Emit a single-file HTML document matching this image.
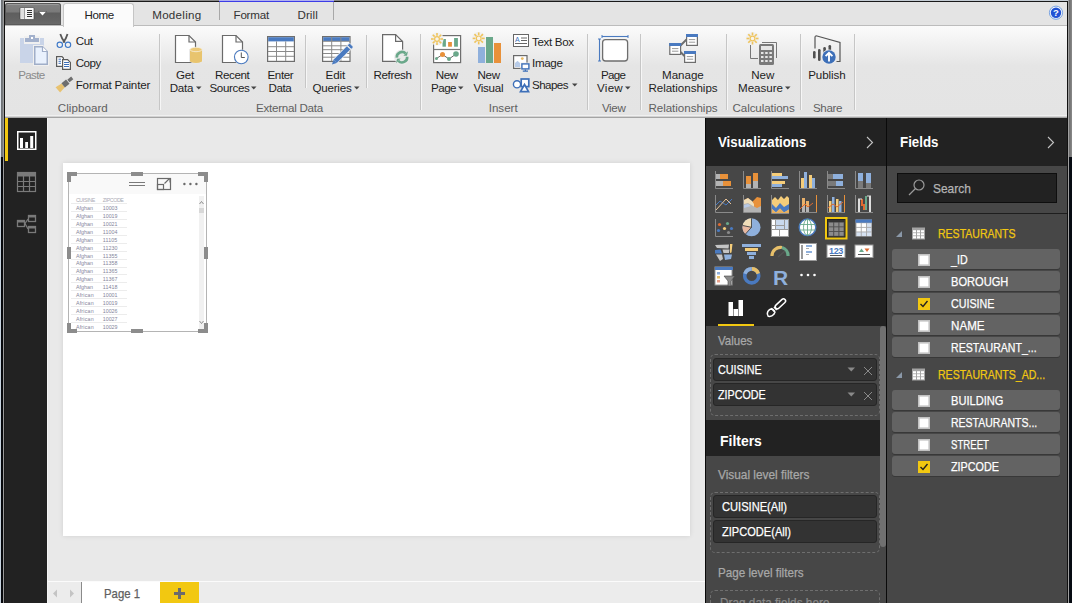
<!DOCTYPE html>
<html><head><meta charset="utf-8">
<style>
html,body{margin:0;padding:0;width:1072px;height:603px;overflow:hidden;background:#e9e9e9}
body{position:relative;font-family:"Liberation Sans",sans-serif}
.r{position:absolute;display:block}
.t{position:absolute;white-space:nowrap;line-height:1;font-family:"Liberation Sans",sans-serif}
</style></head><body>
<div class="r" style="left:0px;top:0px;width:1072px;height:603px;background:#e9e9e9"></div>
<div class="r" style="left:0px;top:0px;width:1072px;height:26px;background:#e4e4e4"></div>
<div class="r" style="left:4px;top:26px;width:1063px;height:91px;background:linear-gradient(#fbfbfb 0px,#f0f0f0 20px,#e5e5e5 40px,#e4e4e4 91px)"></div>
<div class="r" style="left:4px;top:115px;width:1063px;height:1px;background:#f0f0f0"></div>
<div class="r" style="left:4px;top:116px;width:1063px;height:1px;background:#d2d2d2"></div>
<div class="r" style="left:4px;top:117px;width:1063px;height:1px;background:#a4a4a4"></div>
<div class="r" style="left:4px;top:25px;width:1063px;height:1px;background:#bcbcbc"></div>
<div class="r" style="left:5px;top:3px;width:56px;height:22px;background:linear-gradient(#828282 0px,#7a7a7a 9px,#5e5e5e 10px,#646464 18px,#6a6a6a 22px);border-radius:3px 3px 0 0;box-shadow:inset 0 0 0 1px #5a5a5a, inset 0 2px 0 #9a9a9a"></div>
<svg class="r" style="left:19px;top:7px" width="30" height="14" viewBox="0 0 30 14"><rect x="1" y="0.5" width="14" height="12" rx="1" fill="#f6f6f6" stroke="#3a3a3a" stroke-width=".6"/><rect x="2" y="1.5" width="3" height="10" fill="#e0e0e0"/><rect x="5" y="1" width="0.8" height="11" fill="#888"/><path d="M8 3.5h5M8 5.5h5M8 7.5h5M8 9.5h5" stroke="#333" stroke-width="1"/><path d="M19.5 4.5H27.5L23.5 9Z" fill="#fff" stroke="#333" stroke-width=".5"/></svg>
<div class="r" style="left:63px;top:3px;width:71px;height:24px;background:#fbfbfb;border:1px solid #c5c5c5;border-bottom:none;border-radius:3px 3px 0 0;box-sizing:border-box"></div>
<div class="t" style="left:84.40px;top:9.18px;font-size:11.6px;color:#222;letter-spacing:-0.386px;transform-origin:0 0;">Home</div>
<div class="t" style="left:152.20px;top:9.18px;font-size:11.6px;color:#333;letter-spacing:0.290px;transform-origin:0 0;">Modeling</div>
<div class="t" style="left:233.50px;top:9.18px;font-size:11.6px;color:#333;letter-spacing:-0.206px;transform-origin:0 0;">Format</div>
<div class="t" style="left:297.40px;top:9.18px;font-size:11.6px;color:#333;letter-spacing:0.125px;transform-origin:0 0;">Drill</div>
<div class="r" style="left:219px;top:2px;width:1px;height:18px;background:#a8a8a8"></div>
<div class="r" style="left:333px;top:2px;width:1px;height:18px;background:#a8a8a8"></div>
<svg class="r" style="left:1048px;top:5px" width="16" height="16" viewBox="0 0 16 16"><circle cx="8" cy="7.7" r="6.6" fill="#f4f8fc" stroke="#6a9ae0" stroke-width="0.9"/><circle cx="8" cy="7.7" r="5.2" fill="#2152d4"/><text x="8" y="11" font-size="9.5" font-weight="bold" text-anchor="middle" fill="#fff" font-family="Liberation Sans">?</text></svg>
<div class="r" style="left:0px;top:0px;width:590px;height:1px;background:#8a8a8a"></div>
<div class="r" style="left:590px;top:0px;width:482px;height:1px;background:#c4ccd4"></div>
<div class="r" style="left:0px;top:1px;width:1068px;height:1px;background:#1a1a1a"></div>
<div class="r" style="left:0px;top:0px;width:1px;height:157px;background:#dfe6ee"></div>
<div class="r" style="left:0px;top:157px;width:1px;height:446px;background:#c8d4e0"></div>
<div class="r" style="left:1px;top:0px;width:2px;height:157px;background:linear-gradient(90deg,#6a6e72,#7a7e82)"></div>
<div class="r" style="left:1px;top:157px;width:2px;height:446px;background:#06080c"></div>
<div class="r" style="left:3px;top:0px;width:1px;height:603px;background:#9a9a9a"></div>
<div class="r" style="left:4px;top:1px;width:1px;height:117px;background:#111"></div>
<div class="r" style="left:4px;top:118px;width:1px;height:485px;background:#1a1a1a"></div>
<div class="r" style="left:1067px;top:1px;width:1px;height:602px;background:#111"></div>
<div class="r" style="left:1068px;top:0px;width:1px;height:603px;background:#a0a0a0"></div>
<div class="r" style="left:1069px;top:0px;width:3px;height:157px;background:linear-gradient(90deg,#6a6a6a,#8a8a8a)"></div>
<div class="r" style="left:1069px;top:157px;width:3px;height:446px;background:#070b12"></div>
<div class="r" style="left:219px;top:0px;width:115px;height:1px;background:#b0b0f0"></div>
<div class="r" style="left:219px;top:1px;width:115px;height:1px;background:#3c3ce6"></div>
<div class="r" style="left:159px;top:34px;width:1px;height:76px;background:#c6c6c6;box-shadow:1px 0 0 #f6f6f6"></div>
<div class="r" style="left:420px;top:34px;width:1px;height:76px;background:#c6c6c6;box-shadow:1px 0 0 #f6f6f6"></div>
<div class="r" style="left:587px;top:34px;width:1px;height:76px;background:#c6c6c6;box-shadow:1px 0 0 #f6f6f6"></div>
<div class="r" style="left:640px;top:34px;width:1px;height:76px;background:#c6c6c6;box-shadow:1px 0 0 #f6f6f6"></div>
<div class="r" style="left:726px;top:34px;width:1px;height:76px;background:#c6c6c6;box-shadow:1px 0 0 #f6f6f6"></div>
<div class="r" style="left:800px;top:34px;width:1px;height:76px;background:#c6c6c6;box-shadow:1px 0 0 #f6f6f6"></div>
<div class="r" style="left:854px;top:34px;width:1px;height:76px;background:#c6c6c6;box-shadow:1px 0 0 #f6f6f6"></div>
<div class="r" style="left:305px;top:35px;width:1px;height:53px;background:#c6c6c6;box-shadow:1px 0 0 #f6f6f6"></div>
<div class="r" style="left:366px;top:35px;width:1px;height:53px;background:#c6c6c6;box-shadow:1px 0 0 #f6f6f6"></div>
<svg class="r" style="left:14px;top:30px" width="40" height="40" viewBox="0 0 40 40">
<rect x="6" y="8" width="24" height="25" fill="#c9d4e8"/>
<rect x="10" y="6" width="16" height="8" fill="#f0f0f0"/>
<rect x="11" y="8" width="14" height="4" fill="#a3b1cc"/>
<rect x="15" y="5" width="6" height="5" fill="#a3b1cc"/>
<rect x="17" y="7" width="2" height="2" fill="#fff"/>
<path d="M19 15H29L35 21V36H19Z" fill="#f0f0f0"/>
<path d="M20.75 16.75H28.5L33.25 21.5V34.25H20.75Z" fill="#e9f1fd" stroke="#a0aec8" stroke-width="1.5"/>
<path d="M28.5 16.75V21.5H33.25" fill="#fff" stroke="#a0aec8" stroke-width="1.2"/>
</svg>
<div class="t" style="left:-118.60px;width:300px;text-align:center;top:69.18px;font-size:11.6px;color:#8a8a8a;letter-spacing:-0.653px;transform-origin:50% 0;">Paste</div>
<svg class="r" style="left:52px;top:30px" width="22" height="22" viewBox="0 0 22 22"><path d="M8.3 4Q9.5 8 12.8 12.5" fill="none" stroke="#585858" stroke-width="1.8"/><path d="M15.5 4Q14.5 8 11.2 12.5" fill="none" stroke="#585858" stroke-width="1.8"/><circle cx="7.8" cy="14.8" r="2.7" fill="none" stroke="#3d78c8" stroke-width="1.1"/><circle cx="16" cy="14.8" r="2.7" fill="none" stroke="#3d78c8" stroke-width="1.1"/></svg>
<div class="t" style="left:75.70px;top:35.18px;font-size:11.6px;color:#1e1e1e;letter-spacing:-0.317px;transform-origin:0 0;">Cut</div>
<svg class="r" style="left:52px;top:52px" width="22" height="22" viewBox="0 0 22 22"><path d="M4.6 4.6H10L11.4 6V14.4H4.6Z" fill="#fff" stroke="#5a5a5a" stroke-width="1.2"/><path d="M6.5 7.2H9M6.5 9.3H9M6.5 11.3H9" stroke="#3d6fb8" stroke-width="1"/><path d="M10.6 7.6H15.6L18.4 10.4V17.4H10.6Z" fill="#fff" stroke="#5a5a5a" stroke-width="1.2"/><path d="M12 10.5H17M12 12.5H17M12 14.5H17" stroke="#3d6fb8" stroke-width="1"/></svg>
<div class="t" style="left:75.70px;top:57.18px;font-size:11.6px;color:#1e1e1e;letter-spacing:-0.445px;transform-origin:0 0;">Copy</div>
<svg class="r" style="left:52px;top:74px" width="22" height="20" viewBox="0 0 22 20"><g transform="translate(1.5 -0.5) rotate(-40 12 10)"><path d="M2 6.5L9 7.5V12.5L2 13.5Z" fill="#e8c270"/><rect x="9" y="7.3" width="6" height="5.4" fill="#6e6e6e"/><rect x="15.8" y="8.3" width="5" height="3.4" fill="#6e6e6e"/></g></svg>
<div class="t" style="left:75.70px;top:79.18px;font-size:11.6px;color:#1e1e1e;letter-spacing:-0.151px;transform-origin:0 0;">Format Painter</div>
<div class="t" style="left:-67.20px;width:300px;text-align:center;top:102.18px;font-size:11.6px;color:#606060;letter-spacing:0.039px;transform-origin:50% 0;">Clipboard</div>
<svg class="r" style="left:174px;top:34px" width="30" height="32" viewBox="0 0 30 32"><path d="M1.5 1.5H15L21.5 8V28.5H1.5Z" fill="#fff" stroke="#6a6a6a" stroke-width="1.2"/><path d="M15 1.5V8H21.5" fill="none" stroke="#6a6a6a" stroke-width="1.2"/><path d="M15 15V27.5Q22 31.5 29 27.5V15Z" fill="#eaeaea"/><path d="M16 15.5V27.5Q22 30.5 28 27.5V15.5Z" fill="#e8c46e"/><ellipse cx="22" cy="15.5" rx="6" ry="2.2" fill="#ecc978" stroke="#f6f0e0" stroke-width=".8"/></svg>
<div class="t" style="left:35.00px;width:300px;text-align:center;top:69.18px;font-size:11.6px;color:#1e1e1e;letter-spacing:-0.232px;transform-origin:50% 0;">Get</div>
<div class="t" style="left:31.50px;width:300px;text-align:center;top:81.78px;font-size:11.6px;color:#1e1e1e;letter-spacing:-0.251px;transform-origin:50% 0;">Data</div>
<svg class="r" style="left:196px;top:86px" width="6" height="4" viewBox="0 0 6 4"><path d="M0 0.5H5.5L2.75 3.5Z" fill="#444"/></svg>
<svg class="r" style="left:221px;top:34px" width="32" height="32" viewBox="0 0 32 32"><path d="M1.5 1.5H15L21.5 8V28.5H1.5Z" fill="#fff" stroke="#6a6a6a" stroke-width="1.2"/><path d="M15 1.5V8H21.5" fill="none" stroke="#6a6a6a" stroke-width="1.2"/><circle cx="20.3" cy="23" r="7.6" fill="#eaeaea"/><circle cx="20.3" cy="23" r="6.8" fill="#fff" stroke="#4a7ac0" stroke-width="1.1"/><path d="M20.3 18.5V23.5H23.8" fill="none" stroke="#555" stroke-width="1"/></svg>
<div class="t" style="left:82.20px;width:300px;text-align:center;top:69.18px;font-size:11.6px;color:#1e1e1e;letter-spacing:-0.392px;transform-origin:50% 0;">Recent</div>
<div class="t" style="left:79.50px;width:300px;text-align:center;top:81.78px;font-size:11.6px;color:#1e1e1e;letter-spacing:-0.365px;transform-origin:50% 0;">Sources</div>
<svg class="r" style="left:251px;top:86px" width="6" height="4" viewBox="0 0 6 4"><path d="M0 0.5H5.5L2.75 3.5Z" fill="#444"/></svg>
<svg class="r" style="left:266px;top:35px" width="30" height="28" viewBox="0 0 30 28"><rect x="1.6" y="1.6" width="26.8" height="24.8" fill="#fff" stroke="#6e6e6e" stroke-width="1.2"/><rect x="2.2" y="2.2" width="25.6" height="4.2" fill="#4a7ac0"/><path d="M2 11.7H28M2 16.5H28M2 21.3H28M10.5 6.4V26M19.7 6.4V26" stroke="#8a8a8a" stroke-width="1"/></svg>
<div class="t" style="left:130.40px;width:300px;text-align:center;top:69.18px;font-size:11.6px;color:#1e1e1e;letter-spacing:-0.345px;transform-origin:50% 0;">Enter</div>
<div class="t" style="left:130.00px;width:300px;text-align:center;top:81.78px;font-size:11.6px;color:#1e1e1e;letter-spacing:-0.426px;transform-origin:50% 0;">Data</div>
<svg class="r" style="left:321px;top:35px" width="32" height="32" viewBox="0 0 32 32"><rect x="1.6" y="1.6" width="27.4" height="24.8" fill="#fff" stroke="#6e6e6e" stroke-width="1.2"/><rect x="2.2" y="2.2" width="26.2" height="3.8" fill="#4a7ac0"/><path d="M2 10.8H29M2 14.7H29M2 18.5H29M2 22.2H29M10.7 2V26M19.9 2V26" stroke="#8a8a8a" stroke-width="1"/><path d="M2 6.3H29" stroke="#8a8a8a"/><g transform="translate(20.5 20) rotate(-45)"><rect x="-9.5" y="-3" width="20" height="6" fill="#f2f2f2"/><rect x="-9" y="-2.3" width="19" height="4.6" fill="#4a7ac0"/><path d="M-9 -2.3L-13.5 0L-9 2.3Z" fill="#4a7ac0"/><rect x="11" y="-2.8" width="3.2" height="5.6" fill="#4a7ac0" stroke="#f2f2f2" stroke-width=".8"/></g></svg>
<div class="t" style="left:185.30px;width:300px;text-align:center;top:69.18px;font-size:11.6px;color:#1e1e1e;letter-spacing:-0.147px;transform-origin:50% 0;">Edit</div>
<div class="t" style="left:182.00px;width:300px;text-align:center;top:81.78px;font-size:11.6px;color:#1e1e1e;letter-spacing:-0.231px;transform-origin:50% 0;">Queries</div>
<svg class="r" style="left:354px;top:86px" width="6" height="4" viewBox="0 0 6 4"><path d="M0 0.5H5.5L2.75 3.5Z" fill="#444"/></svg>
<svg class="r" style="left:375px;top:30px" width="36" height="36" viewBox="0 0 36 36"><path d="M7.6 4.6H20.6L27.6 11.6V31.4H7.6Z" fill="#fff" stroke="#6a6a6a" stroke-width="1.2"/><path d="M20.6 4.6V11.3H27.6" fill="none" stroke="#6a6a6a" stroke-width="1.2"/><circle cx="27" cy="27.2" r="7.8" fill="#eaeaea"/><path d="M21.82 27.65A5.2 5.2 0 0 1 30.68 23.52" fill="none" stroke="#6aa88a" stroke-width="2.6"/><path d="M32.98 21.22L31.97 25.68L28.38 25.82Z" fill="#6aa88a"/><path d="M32.18 26.75A5.2 5.2 0 0 1 23.32 30.88" fill="none" stroke="#6aa88a" stroke-width="2.6"/><path d="M21.02 33.18L22.03 28.72L25.62 28.58Z" fill="#6aa88a"/></svg>
<div class="t" style="left:242.50px;width:300px;text-align:center;top:69.18px;font-size:11.6px;color:#1e1e1e;letter-spacing:-0.360px;transform-origin:50% 0;">Refresh</div>
<div class="t" style="left:139.50px;width:300px;text-align:center;top:102.18px;font-size:11.6px;color:#606060;letter-spacing:-0.252px;transform-origin:50% 0;">External Data</div>
<svg class="r" style="left:428px;top:30px" width="36" height="36" viewBox="0 0 36 36">
<rect x="5.6" y="5.6" width="27" height="27" fill="#fff" stroke="#6e6e6e" stroke-width="1.2"/>
<path d="M5.6 19.5H32.6" stroke="#7a7a7a" stroke-width="1.2"/>
<rect x="14.5" y="9" width="3.4" height="7.7" fill="#6aa88a"/><rect x="20.1" y="12" width="3.8" height="4.7" fill="#e8913a"/><rect x="26.1" y="8" width="3.8" height="8.7" fill="#6aa88a"/>
<path d="M8.5 28.5L14.5 24.5L21 29L28 24" fill="none" stroke="#6a6a6a" stroke-width="1"/>
<circle cx="8.5" cy="28.5" r="1.5" fill="#6aa88a"/><circle cx="14.5" cy="24.5" r="2.5" fill="#e8913a"/><circle cx="21" cy="29" r="2" fill="#6aa88a"/><circle cx="28" cy="24" r="2.8" fill="#6aa88a"/>
<circle cx="9" cy="9" r="6.6" fill="#f0f0f0"/><path d="M12.30 9.00L15.00 9.00" stroke="#efc45c" stroke-width="1.6"/><path d="M11.33 11.33L13.24 13.24" stroke="#efc45c" stroke-width="1.6"/><path d="M9.00 12.30L9.00 15.00" stroke="#efc45c" stroke-width="1.6"/><path d="M6.67 11.33L4.76 13.24" stroke="#efc45c" stroke-width="1.6"/><path d="M5.70 9.00L3.00 9.00" stroke="#efc45c" stroke-width="1.6"/><path d="M6.67 6.67L4.76 4.76" stroke="#efc45c" stroke-width="1.6"/><path d="M9.00 5.70L9.00 3.00" stroke="#efc45c" stroke-width="1.6"/><path d="M11.33 6.67L13.24 4.76" stroke="#efc45c" stroke-width="1.6"/><circle cx="9" cy="9" r="2.4" fill="#f8f4ea" stroke="#efc45c" stroke-width="1.2"/></svg>
<div class="t" style="left:296.70px;width:300px;text-align:center;top:69.18px;font-size:11.6px;color:#1e1e1e;letter-spacing:-0.369px;transform-origin:50% 0;">New</div>
<div class="t" style="left:293.50px;width:300px;text-align:center;top:81.78px;font-size:11.6px;color:#1e1e1e;letter-spacing:-0.523px;transform-origin:50% 0;">Page</div>
<svg class="r" style="left:458px;top:86px" width="6" height="4" viewBox="0 0 6 4"><path d="M0 0.5H5.5L2.75 3.5Z" fill="#444"/></svg>
<svg class="r" style="left:472px;top:32px" width="32" height="32" viewBox="0 0 32 32">
<rect x="6" y="15" width="7" height="16" fill="#8fb0dc"/>
<rect x="14" y="5" width="7" height="26" fill="#6aa88a"/>
<rect x="22" y="11" width="7" height="20" fill="#e8913a"/>
<circle cx="6.7" cy="6.4" r="6.6" fill="#f0f0f0"/><path d="M10.00 6.40L12.70 6.40" stroke="#efc45c" stroke-width="1.6"/><path d="M9.03 8.73L10.94 10.64" stroke="#efc45c" stroke-width="1.6"/><path d="M6.70 9.70L6.70 12.40" stroke="#efc45c" stroke-width="1.6"/><path d="M4.37 8.73L2.46 10.64" stroke="#efc45c" stroke-width="1.6"/><path d="M3.40 6.40L0.70 6.40" stroke="#efc45c" stroke-width="1.6"/><path d="M4.37 4.07L2.46 2.16" stroke="#efc45c" stroke-width="1.6"/><path d="M6.70 3.10L6.70 0.40" stroke="#efc45c" stroke-width="1.6"/><path d="M9.03 4.07L10.94 2.16" stroke="#efc45c" stroke-width="1.6"/><circle cx="6.7" cy="6.4" r="2.4" fill="#f8f4ea" stroke="#efc45c" stroke-width="1.2"/></svg>
<div class="t" style="left:338.70px;width:300px;text-align:center;top:69.18px;font-size:11.6px;color:#1e1e1e;letter-spacing:-0.235px;transform-origin:50% 0;">New</div>
<div class="t" style="left:338.40px;width:300px;text-align:center;top:81.78px;font-size:11.6px;color:#1e1e1e;letter-spacing:-0.264px;transform-origin:50% 0;">Visual</div>
<svg class="r" style="left:512px;top:33px" width="18" height="15" viewBox="0 0 18 15"><rect x="1.5" y="1.5" width="15" height="12" fill="#fff" stroke="#666"/><text x="3" y="9" font-size="7" fill="#3d6fb8" font-family="Liberation Sans">A</text><path d="M9 5h6M9 7.5h6M3 10.5h12" stroke="#555" stroke-width=".9"/></svg>
<div class="t" style="left:532.00px;top:35.68px;font-size:11.6px;color:#1e1e1e;letter-spacing:-0.336px;transform-origin:0 0;">Text Box</div>
<svg class="r" style="left:508px;top:50px" width="26" height="46" viewBox="0 0 26 46"><rect x="5.6" y="5.6" width="13.4" height="12.8" fill="#fff" stroke="#6a6a6a" stroke-width="1.2"/><path d="M7 17V13L9.5 10.8L12 13V17Z" fill="#b7cbe8"/><circle cx="14.3" cy="8.6" r="1.4" fill="#e8b860"/><rect x="12.6" y="12.6" width="9.5" height="7.2" fill="#ececec"/><rect x="13.9" y="13.9" width="7" height="5" fill="#fff" stroke="#3d6fb8" stroke-width="1.4"/><path d="M17.4 19.5V21M14.8 21.2H20" stroke="#3d6fb8" stroke-width="1.2"/></svg>
<div class="t" style="left:532.00px;top:57.38px;font-size:11.6px;color:#1e1e1e;letter-spacing:-0.328px;transform-origin:0 0;">Image</div>
<svg class="r" style="left:508px;top:74px" width="26" height="22" viewBox="0 0 26 22"><circle cx="9" cy="10.3" r="3.6" fill="#fff" stroke="#3d6fb8" stroke-width="1.4"/><rect x="13.2" y="5" width="7.6" height="7.6" fill="#fff" stroke="#3d6fb8" stroke-width="1.7"/><path d="M16.5 10.5L20.5 17.6H12.5Z" fill="#fff" stroke="#3d6fb8" stroke-width="1.7" stroke-linejoin="miter"/></svg>
<div class="t" style="left:532.00px;top:79.08px;font-size:11.6px;color:#1e1e1e;letter-spacing:-0.557px;transform-origin:0 0;">Shapes</div>
<svg class="r" style="left:572px;top:83px" width="6" height="4" viewBox="0 0 6 4"><path d="M0 0.5H5.5L2.75 3.5Z" fill="#444"/></svg>
<div class="t" style="left:353.20px;width:300px;text-align:center;top:102.18px;font-size:11.6px;color:#606060;letter-spacing:0.015px;transform-origin:50% 0;">Insert</div>
<svg class="r" style="left:597px;top:34px" width="34" height="30" viewBox="0 0 34 30"><path d="M5 2.5H31" stroke="#4a7ac0" stroke-width="1.1"/><path d="M5 1V4M31 1V4" stroke="#4a7ac0"/><path d="M2.5 5V27" stroke="#4a7ac0" stroke-width="1.1"/><path d="M1 5H4M1 27H4" stroke="#4a7ac0"/><rect x="5.6" y="5.6" width="25" height="21.4" rx="3" fill="#fff" stroke="#6e6e6e" stroke-width="1.3"/></svg>
<div class="t" style="left:463.20px;width:300px;text-align:center;top:69.18px;font-size:11.6px;color:#1e1e1e;letter-spacing:-0.648px;transform-origin:50% 0;">Page</div>
<div class="t" style="left:460.00px;width:300px;text-align:center;top:81.78px;font-size:11.6px;color:#1e1e1e;letter-spacing:0.266px;transform-origin:50% 0;">View</div>
<svg class="r" style="left:625px;top:86px" width="6" height="4" viewBox="0 0 6 4"><path d="M0 0.5H5.5L2.75 3.5Z" fill="#444"/></svg>
<div class="t" style="left:463.70px;width:300px;text-align:center;top:102.18px;font-size:11.6px;color:#606060;letter-spacing:-0.359px;transform-origin:50% 0;">View</div>
<svg class="r" style="left:660px;top:30px" width="45" height="36" viewBox="0 0 45 36"><path d="M20.5 15.5L26.5 9.5M20.5 22L24.5 26" stroke="#6e6e6e" stroke-width="2"/><rect x="9.799999999999999" y="13.6" width="10.8" height="10.8" fill="#fff" stroke="#6e6e6e" stroke-width="1.2"/><rect x="9.2" y="13" width="12" height="3" fill="#4a7ac0"/><path d="M12.0 18.6h6.4M12.0 21.2h6.4" stroke="#9a9a9a" stroke-width="1"/><rect x="26.6" y="4.6" width="10.8" height="10.8" fill="#fff" stroke="#6e6e6e" stroke-width="1.2"/><rect x="26" y="4" width="12" height="3" fill="#4a7ac0"/><path d="M28.8 9.6h6.4M28.8 12.2h6.4" stroke="#9a9a9a" stroke-width="1"/><rect x="24.6" y="21.6" width="10.8" height="10.8" fill="#fff" stroke="#6e6e6e" stroke-width="1.2"/><rect x="24" y="21" width="12" height="3" fill="#4a7ac0"/><path d="M26.8 26.6h6.4M26.8 29.2h6.4" stroke="#9a9a9a" stroke-width="1"/></svg>
<div class="t" style="left:532.90px;width:300px;text-align:center;top:69.18px;font-size:11.6px;color:#1e1e1e;letter-spacing:-0.020px;transform-origin:50% 0;">Manage</div>
<div class="t" style="left:533.00px;width:300px;text-align:center;top:81.78px;font-size:11.6px;color:#1e1e1e;letter-spacing:-0.034px;transform-origin:50% 0;">Relationships</div>
<div class="t" style="left:533.00px;width:300px;text-align:center;top:102.18px;font-size:11.6px;color:#606060;letter-spacing:-0.034px;transform-origin:50% 0;">Relationships</div>
<svg class="r" style="left:746px;top:32px" width="34" height="34" viewBox="0 0 34 34">
<path d="M4.5 13V26.5H12" fill="none" stroke="#777"/><path d="M16 10.5H30.5V26" fill="none" stroke="#777"/>
<rect x="13" y="12" width="15" height="21" rx="1.5" fill="#7a7a7a"/>
<rect x="15" y="14" width="11" height="4" fill="#e6e6e6"/>
<g fill="#e6e6e6"><rect x="15" y="20" width="2.5" height="2"/><rect x="19.2" y="20" width="2.5" height="2"/><rect x="23.4" y="20" width="2.5" height="2"/>
<rect x="15" y="24" width="2.5" height="2"/><rect x="19.2" y="24" width="2.5" height="2"/><rect x="23.4" y="24" width="2.5" height="2"/>
<rect x="15" y="28" width="2.5" height="2"/><rect x="19.2" y="28" width="2.5" height="2"/><rect x="23.4" y="28" width="2.5" height="2"/></g>
<circle cx="6.5" cy="6.5" r="6.6" fill="#f0f0f0"/><path d="M9.80 6.50L12.50 6.50" stroke="#efc45c" stroke-width="1.6"/><path d="M8.83 8.83L10.74 10.74" stroke="#efc45c" stroke-width="1.6"/><path d="M6.50 9.80L6.50 12.50" stroke="#efc45c" stroke-width="1.6"/><path d="M4.17 8.83L2.26 10.74" stroke="#efc45c" stroke-width="1.6"/><path d="M3.20 6.50L0.50 6.50" stroke="#efc45c" stroke-width="1.6"/><path d="M4.17 4.17L2.26 2.26" stroke="#efc45c" stroke-width="1.6"/><path d="M6.50 3.20L6.50 0.50" stroke="#efc45c" stroke-width="1.6"/><path d="M8.83 4.17L10.74 2.26" stroke="#efc45c" stroke-width="1.6"/><circle cx="6.5" cy="6.5" r="2.4" fill="#f8f4ea" stroke="#efc45c" stroke-width="1.2"/></svg>
<div class="t" style="left:612.80px;width:300px;text-align:center;top:69.18px;font-size:11.6px;color:#1e1e1e;letter-spacing:-0.069px;transform-origin:50% 0;">New</div>
<div class="t" style="left:610.50px;width:300px;text-align:center;top:81.78px;font-size:11.6px;color:#1e1e1e;letter-spacing:-0.019px;transform-origin:50% 0;">Measure</div>
<svg class="r" style="left:785px;top:86px" width="6" height="4" viewBox="0 0 6 4"><path d="M0 0.5H5.5L2.75 3.5Z" fill="#444"/></svg>
<div class="t" style="left:613.60px;width:300px;text-align:center;top:102.18px;font-size:11.6px;color:#606060;letter-spacing:-0.083px;transform-origin:50% 0;">Calculations</div>
<svg class="r" style="left:810px;top:33px" width="34" height="33" viewBox="0 0 34 33">
<path d="M5 15.5V4.5Q5 2.5 7 3L30 9.5V28.5H26.5" fill="none" stroke="#555" stroke-width="1.2"/>
<rect x="3" y="18" width="2.6" height="7.5" rx="1.3" fill="#505050"/><rect x="8" y="16" width="2.6" height="12" rx="1.3" fill="#505050"/><rect x="13.3" y="14" width="2.6" height="9" rx="1.3" fill="#505050"/><rect x="18.5" y="12" width="2.6" height="7" rx="1.3" fill="#505050"/>
<circle cx="19" cy="24" r="7.6" fill="#ececec"/>
<circle cx="19" cy="24" r="6.7" fill="#3d6fb8"/>
<path d="M19 28.5V20M15.6 23.2L19 19.8L22.4 23.2" fill="none" stroke="#fff" stroke-width="1.9"/>
</svg>
<div class="t" style="left:676.90px;width:300px;text-align:center;top:69.18px;font-size:11.6px;color:#1e1e1e;letter-spacing:-0.092px;transform-origin:50% 0;">Publish</div>
<div class="t" style="left:677.50px;width:300px;text-align:center;top:102.18px;font-size:11.6px;color:#606060;letter-spacing:-0.391px;transform-origin:50% 0;">Share</div>
<div class="r" style="left:5px;top:118px;width:42px;height:485px;background:#222"></div>
<div class="r" style="left:47px;top:118px;width:1px;height:485px;background:#f4f4f4"></div>
<div class="r" style="left:5px;top:118px;width:3px;height:43px;background:#f2c811"></div>
<svg class="r" style="left:16px;top:130px" width="22" height="21" viewBox="0 0 22 21"><rect x="1.75" y="1.75" width="18" height="17.5" fill="none" stroke="#fff" stroke-width="1.5"/><rect x="4" y="8" width="3" height="10" fill="#fff"/><rect x="9.2" y="12" width="2.8" height="6" fill="#fff"/><rect x="14.2" y="6" width="3" height="12" fill="#fff"/></svg>
<svg class="r" style="left:16px;top:171px" width="22" height="22" viewBox="0 0 22 22"><rect x="1.5" y="1.5" width="18" height="19" fill="none" stroke="#7a7a7a" stroke-width="1.2"/><rect x="1" y="1" width="19" height="4.5" fill="#7a7a7a"/><path d="M1.5 10.5H19.5M1.5 15.5H19.5M7.5 5V20.5M13.5 5V20.5" stroke="#7a7a7a" stroke-width="1.2"/></svg>
<svg class="r" style="left:16px;top:213px" width="22" height="22" viewBox="0 0 22 22"><rect x="1.5" y="7.5" width="7" height="6" fill="none" stroke="#7a7a7a" stroke-width="1.3"/><rect x="1" y="7" width="8" height="2.5" fill="#7a7a7a"/><rect x="12.5" y="2.5" width="7" height="6" fill="none" stroke="#7a7a7a" stroke-width="1.3"/><rect x="12" y="2" width="8" height="2.5" fill="#7a7a7a"/><rect x="12.5" y="13.5" width="7" height="6" fill="none" stroke="#7a7a7a" stroke-width="1.3"/><rect x="12" y="13" width="8" height="2.5" fill="#7a7a7a"/><path d="M9 10.5L12 6M9 10.5L12 16" stroke="#7a7a7a" stroke-width="1.3" fill="none"/></svg>
<div class="r" style="left:48px;top:118px;width:657px;height:463px;background:#e9e9e9"></div>
<div class="r" style="left:63px;top:163px;width:627px;height:373px;background:#fff;box-shadow:0 0 5px rgba(0,0,0,.10)"></div>
<div class="r" style="left:48px;top:581px;width:657px;height:22px;background:#ececec"></div>
<div class="r" style="left:48px;top:581px;width:657px;height:1px;background:#fbfbfb"></div>
<svg class="r" style="left:50px;top:588px" width="28" height="12" viewBox="0 0 28 12"><path d="M7 1.5L3 5.5L7 9.5Z" fill="#c4c4c4"/><path d="M20 1.5L24 5.5L20 9.5Z" fill="#c4c4c4"/></svg>
<div class="r" style="left:81px;top:582px;width:1px;height:21px;background:#8a8a8a"></div>
<div class="r" style="left:82px;top:582px;width:78px;height:21px;background:#fff"></div>
<div class="t" style="left:104.20px;top:588.13px;font-size:12.6px;color:#606060;letter-spacing:0.000px;transform:scaleX(0.9014);transform-origin:0 0;-webkit-text-stroke:0.25px #606060;">Page 1</div>
<div class="r" style="left:160px;top:582px;width:39px;height:21px;background:#f2c811"></div>
<div class="r" style="left:174px;top:592px;width:11px;height:3px;background:#6b6b6b"></div>
<div class="r" style="left:178px;top:588px;width:3px;height:11px;background:#6b6b6b"></div>
<div class="r" style="left:68px;top:173px;width:139px;height:159px;border:1px solid #b4b4b4;box-sizing:border-box;background:#fff"></div>
<div class="r" style="left:69px;top:174px;width:137px;height:20px;background:#f9f9f9"></div>
<div class="r" style="left:67px;top:172px;width:10px;height:4px;background:#8c8c8c"></div>
<div class="r" style="left:67px;top:172px;width:4px;height:10px;background:#8c8c8c"></div>
<div class="r" style="left:198px;top:172px;width:10px;height:4px;background:#8c8c8c"></div>
<div class="r" style="left:204px;top:172px;width:4px;height:10px;background:#8c8c8c"></div>
<div class="r" style="left:67px;top:329px;width:10px;height:4px;background:#8c8c8c"></div>
<div class="r" style="left:67px;top:323px;width:4px;height:10px;background:#8c8c8c"></div>
<div class="r" style="left:198px;top:329px;width:10px;height:4px;background:#8c8c8c"></div>
<div class="r" style="left:204px;top:323px;width:4px;height:10px;background:#8c8c8c"></div>
<div class="r" style="left:131px;top:172px;width:12px;height:4px;background:#8c8c8c"></div>
<div class="r" style="left:131px;top:329px;width:12px;height:4px;background:#8c8c8c"></div>
<div class="r" style="left:67px;top:247px;width:4px;height:12px;background:#8c8c8c"></div>
<div class="r" style="left:204px;top:247px;width:4px;height:12px;background:#8c8c8c"></div>
<div class="r" style="left:129px;top:182px;width:16px;height:1px;background:#7a7a7a"></div>
<div class="r" style="left:129px;top:185px;width:16px;height:1px;background:#7a7a7a"></div>
<svg class="r" style="left:156px;top:177px" width="16" height="14" viewBox="0 0 16 14"><rect x="1.5" y="1.5" width="13" height="11" fill="none" stroke="#6a6a6a" stroke-width="1.2"/><rect x="1.5" y="7.5" width="6" height="5" fill="none" stroke="#6a6a6a" stroke-width="1.2"/><path d="M8.5 6.5L13.5 1.5M10 1.5H14V5.5" fill="none" stroke="#6a6a6a" stroke-width="1.1"/></svg>
<svg class="r" style="left:182px;top:182px" width="4" height="4" viewBox="0 0 4 4"><circle cx="2.40" cy="2" r="1.2" fill="#6a6a6a"/></svg>
<svg class="r" style="left:188px;top:182px" width="4" height="4" viewBox="0 0 4 4"><circle cx="2.40" cy="2" r="1.2" fill="#6a6a6a"/></svg>
<svg class="r" style="left:194px;top:182px" width="4" height="4" viewBox="0 0 4 4"><circle cx="2.40" cy="2" r="1.2" fill="#6a6a6a"/></svg>
<div class="r" style="left:199px;top:196px;width:5px;height:133px;background:#f1f1f1"></div>
<svg class="r" style="left:199px;top:200px" width="5" height="5" viewBox="0 0 5 5"><path d="M0.5 4L2.5 1.5L4.5 4" fill="none" stroke="#777" stroke-width=".8"/></svg>
<div class="r" style="left:199px;top:208px;width:5px;height:5px;background:#d8d8d8"></div>
<svg class="r" style="left:199px;top:320px" width="5" height="5" viewBox="0 0 5 5"><path d="M0.5 1L2.5 3.5L4.5 1" fill="none" stroke="#777" stroke-width=".8"/></svg>
<div class="t" style="left:75.90px;top:198.21px;font-size:5.3px;color:#aaaab4;letter-spacing:-0.343px;transform-origin:0 0;">CUISINE</div>
<div class="t" style="left:102.80px;top:198.21px;font-size:5.3px;color:#aaaab4;letter-spacing:-0.408px;transform-origin:0 0;">ZIPCODE</div>
<div class="r" style="left:71px;top:203px;width:56px;height:1px;background:#ececec"></div>
<div class="t" style="left:75.90px;top:206.11px;font-size:5.3px;color:#84849a;letter-spacing:0.050px;transform-origin:0 0;">Afghan</div>
<div class="t" style="left:102.80px;top:206.11px;font-size:5.3px;color:#84849a;letter-spacing:-0.028px;transform-origin:0 0;">10003</div>
<div class="r" style="left:71px;top:211px;width:56px;height:1px;background:#ececec"></div>
<div class="t" style="left:75.90px;top:214.01px;font-size:5.3px;color:#84849a;letter-spacing:0.050px;transform-origin:0 0;">Afghan</div>
<div class="t" style="left:102.80px;top:214.01px;font-size:5.3px;color:#84849a;letter-spacing:-0.028px;transform-origin:0 0;">10019</div>
<div class="r" style="left:71px;top:219px;width:56px;height:1px;background:#ececec"></div>
<div class="t" style="left:75.90px;top:221.91px;font-size:5.3px;color:#84849a;letter-spacing:0.050px;transform-origin:0 0;">Afghan</div>
<div class="t" style="left:102.80px;top:221.91px;font-size:5.3px;color:#84849a;letter-spacing:-0.028px;transform-origin:0 0;">10021</div>
<div class="r" style="left:71px;top:227px;width:56px;height:1px;background:#ececec"></div>
<div class="t" style="left:75.90px;top:229.81px;font-size:5.3px;color:#84849a;letter-spacing:0.050px;transform-origin:0 0;">Afghan</div>
<div class="t" style="left:102.80px;top:229.81px;font-size:5.3px;color:#84849a;letter-spacing:0.051px;transform-origin:0 0;">11004</div>
<div class="r" style="left:71px;top:235px;width:56px;height:1px;background:#ececec"></div>
<div class="t" style="left:75.90px;top:237.71px;font-size:5.3px;color:#84849a;letter-spacing:0.050px;transform-origin:0 0;">Afghan</div>
<div class="t" style="left:102.80px;top:237.71px;font-size:5.3px;color:#84849a;letter-spacing:0.130px;transform-origin:0 0;">11105</div>
<div class="r" style="left:71px;top:243px;width:56px;height:1px;background:#ececec"></div>
<div class="t" style="left:75.90px;top:245.61px;font-size:5.3px;color:#84849a;letter-spacing:0.050px;transform-origin:0 0;">Afghan</div>
<div class="t" style="left:102.80px;top:245.61px;font-size:5.3px;color:#84849a;letter-spacing:0.051px;transform-origin:0 0;">11230</div>
<div class="r" style="left:71px;top:251px;width:56px;height:1px;background:#ececec"></div>
<div class="t" style="left:75.90px;top:253.51px;font-size:5.3px;color:#84849a;letter-spacing:0.050px;transform-origin:0 0;">Afghan</div>
<div class="t" style="left:102.80px;top:253.51px;font-size:5.3px;color:#84849a;letter-spacing:0.051px;transform-origin:0 0;">11355</div>
<div class="r" style="left:71px;top:259px;width:56px;height:1px;background:#ececec"></div>
<div class="t" style="left:75.90px;top:261.41px;font-size:5.3px;color:#84849a;letter-spacing:0.050px;transform-origin:0 0;">Afghan</div>
<div class="t" style="left:102.80px;top:261.41px;font-size:5.3px;color:#84849a;letter-spacing:0.051px;transform-origin:0 0;">11358</div>
<div class="r" style="left:71px;top:267px;width:56px;height:1px;background:#ececec"></div>
<div class="t" style="left:75.90px;top:269.31px;font-size:5.3px;color:#84849a;letter-spacing:0.050px;transform-origin:0 0;">Afghan</div>
<div class="t" style="left:102.80px;top:269.31px;font-size:5.3px;color:#84849a;letter-spacing:0.051px;transform-origin:0 0;">11365</div>
<div class="r" style="left:71px;top:274px;width:56px;height:1px;background:#ececec"></div>
<div class="t" style="left:75.90px;top:277.21px;font-size:5.3px;color:#84849a;letter-spacing:0.050px;transform-origin:0 0;">Afghan</div>
<div class="t" style="left:102.80px;top:277.21px;font-size:5.3px;color:#84849a;letter-spacing:0.051px;transform-origin:0 0;">11367</div>
<div class="r" style="left:71px;top:282px;width:56px;height:1px;background:#ececec"></div>
<div class="t" style="left:75.90px;top:285.11px;font-size:5.3px;color:#84849a;letter-spacing:0.050px;transform-origin:0 0;">Afghan</div>
<div class="t" style="left:102.80px;top:285.11px;font-size:5.3px;color:#84849a;letter-spacing:0.051px;transform-origin:0 0;">11418</div>
<div class="r" style="left:71px;top:290px;width:56px;height:1px;background:#ececec"></div>
<div class="t" style="left:75.90px;top:293.01px;font-size:5.3px;color:#84849a;letter-spacing:0.215px;transform-origin:0 0;">African</div>
<div class="t" style="left:102.80px;top:293.01px;font-size:5.3px;color:#84849a;letter-spacing:-0.028px;transform-origin:0 0;">10001</div>
<div class="r" style="left:71px;top:298px;width:56px;height:1px;background:#ececec"></div>
<div class="t" style="left:75.90px;top:300.91px;font-size:5.3px;color:#84849a;letter-spacing:0.215px;transform-origin:0 0;">African</div>
<div class="t" style="left:102.80px;top:300.91px;font-size:5.3px;color:#84849a;letter-spacing:-0.028px;transform-origin:0 0;">10019</div>
<div class="r" style="left:71px;top:306px;width:56px;height:1px;background:#ececec"></div>
<div class="t" style="left:75.90px;top:308.81px;font-size:5.3px;color:#84849a;letter-spacing:0.215px;transform-origin:0 0;">African</div>
<div class="t" style="left:102.80px;top:308.81px;font-size:5.3px;color:#84849a;letter-spacing:-0.028px;transform-origin:0 0;">10026</div>
<div class="r" style="left:71px;top:314px;width:56px;height:1px;background:#ececec"></div>
<div class="t" style="left:75.90px;top:316.71px;font-size:5.3px;color:#84849a;letter-spacing:0.215px;transform-origin:0 0;">African</div>
<div class="t" style="left:102.80px;top:316.71px;font-size:5.3px;color:#84849a;letter-spacing:-0.028px;transform-origin:0 0;">10027</div>
<div class="r" style="left:71px;top:322px;width:56px;height:1px;background:#ececec"></div>
<div class="t" style="left:75.90px;top:324.61px;font-size:5.3px;color:#84849a;letter-spacing:0.215px;transform-origin:0 0;">African</div>
<div class="t" style="left:102.80px;top:324.61px;font-size:5.3px;color:#84849a;letter-spacing:-0.028px;transform-origin:0 0;">10029</div>
<div class="r" style="left:705px;top:118px;width:1px;height:485px;background:#0a0a0a"></div>
<div class="r" style="left:706px;top:118px;width:180px;height:48px;background:#222"></div>
<div class="t" style="left:718.40px;top:134.97px;font-size:14.8px;color:#fff;font-weight:bold;letter-spacing:0.000px;transform:scaleX(0.8981);transform-origin:0 0;">Visualizations</div>
<svg class="r" style="left:865px;top:136px" width="10" height="13" viewBox="0 0 10 13"><path d="M2 1L7.5 6.5L2 12" fill="none" stroke="#c4c4c4" stroke-width="1.1"/></svg>
<div class="r" style="left:706px;top:166px;width:180px;height:124px;background:#474747"></div>
<div class="r" style="left:706px;top:290px;width:180px;height:36px;background:#222"></div>
<div class="r" style="left:706px;top:326px;width:180px;height:277px;background:#474747"></div>
<div class="r" style="left:706px;top:420px;width:174px;height:36px;background:#222"></div>
<div class="r" style="left:886px;top:118px;width:1px;height:485px;background:#0a0a0a"></div>
<div class="r" style="left:880px;top:326px;width:6px;height:221px;background:#707070;border-radius:3px"></div>
<svg class="r" style="left:0px;top:0px" width="1072" height="603" viewBox="0 0 1072 603"><path d="M715.5 171V188.5H733" fill="none" stroke="#8a8a8a" stroke-width="1"/><rect x="716" y="174" width="4" height="5" fill="#b4b4b4"/><rect x="720" y="174" width="8" height="5" fill="#e8913a"/><rect x="716" y="181" width="7" height="5" fill="#b4b4b4"/><rect x="723" y="181" width="8" height="5" fill="#e8913a"/><path d="M743.5 171V188.5H761" fill="none" stroke="#8a8a8a" stroke-width="1"/><rect x="746" y="176" width="5" height="8" fill="#e8913a"/><rect x="746" y="184" width="5" height="4" fill="#b4b4b4"/><rect x="753" y="173" width="5" height="8" fill="#e8913a"/><rect x="753" y="181" width="5" height="7" fill="#b4b4b4"/><path d="M771.5 171V188.5H789" fill="none" stroke="#8a8a8a" stroke-width="1"/><rect x="772" y="173" width="10" height="3" fill="#f5cd7a"/><rect x="772" y="176" width="16" height="3" fill="#8fb0dc"/><rect x="772" y="181" width="13" height="3" fill="#f5cd7a"/><rect x="772" y="184" width="10" height="3" fill="#8fb0dc"/><path d="M799.5 171V188.5H817" fill="none" stroke="#8a8a8a" stroke-width="1"/><rect x="801" y="178" width="3" height="10" fill="#f5cd7a"/><rect x="804" y="172" width="3" height="16" fill="#8fb0dc"/><rect x="809" y="175" width="3" height="13" fill="#f5cd7a"/><rect x="812" y="178" width="3" height="10" fill="#8fb0dc"/><path d="M827.5 171V188.5H845" fill="none" stroke="#8a8a8a" stroke-width="1"/><rect x="828" y="174" width="5" height="5" fill="#7a7a7a"/><rect x="833" y="174" width="10" height="5" fill="#8fb0dc"/><rect x="828" y="181" width="8" height="5" fill="#7a7a7a"/><rect x="836" y="181" width="7" height="5" fill="#8fb0dc"/><path d="M855.5 171V188.5H873" fill="none" stroke="#8a8a8a" stroke-width="1"/><rect x="858" y="173" width="5" height="8" fill="#8fb0dc"/><rect x="858" y="181" width="5" height="7" fill="#7a7a7a"/><rect x="866" y="173" width="5" height="10" fill="#8fb0dc"/><rect x="866" y="183" width="5" height="5" fill="#7a7a7a"/><path d="M715.5 195V212.5H733" fill="none" stroke="#8a8a8a" stroke-width="1"/><path d="M716 205L720 201L726 205L732 199" fill="none" stroke="#4a7ac0" stroke-width="1"/><path d="M716 210L726 199L731 204" fill="none" stroke="#e8c49a" stroke-width="1"/><path d="M743.5 195V212.5H761" fill="none" stroke="#8a8a8a" stroke-width="1"/><path d="M744 212V200L748 198L752 202L757 197L761 198V212Z" fill="#e8913a"/><path d="M744 212V200L748 198L752 201L754 204V212Z" fill="#f0ddb8"/><path d="M744 212V204L748 203L753 206L757 208L761 206V212Z" fill="#b4b4b4"/><path d="M744 205L748 204L751 206L744 208Z" fill="#b7c9e6"/><path d="M771.5 195V213.5H789" fill="none" stroke="#8a8a8a" stroke-width="1"/><path d="M772 213V200L775 197L778 200L781 196L784 199L787 196L789 198V213Z" fill="#f5cd7a"/><path d="M772 204L776 208L780 203L784 207L789 204V209.5L784 212.5L780 208.5L776 212.5L772 209Z" fill="#4a7ac0"/><path d="M772 213V209L776 212.5L780 208.5L784 212.5L789 209.5V213Z" fill="#e8b060"/><path d="M799.5 195V212.5H817" fill="none" stroke="#8a8a8a" stroke-width="1"/><rect x="802" y="198" width="3" height="14" fill="#e8b06a"/><rect x="806" y="201" width="3" height="11" fill="#e8b06a"/><rect x="802" y="206" width="3" height="6" fill="#b4b4b4"/><rect x="806" y="207" width="3" height="5" fill="#b4b4b4"/><path d="M800 209L805 204L808 207L813 203" fill="none" stroke="#e06a30" stroke-width="1"/><rect x="816" y="195" width="1" height="17" fill="#e8913a"/><path d="M827.5 195V212.5H845" fill="none" stroke="#8a8a8a" stroke-width="1"/><rect x="829" y="201" width="2.5" height="11" fill="#f5cd7a"/><rect x="832" y="197" width="2.5" height="15" fill="#8fb0dc"/><rect x="836" y="199" width="2.5" height="13" fill="#f5cd7a"/><rect x="839" y="201" width="2.5" height="11" fill="#8fb0dc"/><path d="M828 208L833 204L837 207L843 202" fill="none" stroke="#e06a30" stroke-width="1"/><rect x="844" y="195" width="1" height="17" fill="#e8913a"/><path d="M855.5 195V212.5H873" fill="none" stroke="#8a8a8a" stroke-width="1"/><rect x="858" y="199" width="2" height="13" fill="#ddd"/><rect x="861" y="199" width="2" height="7" fill="#e06a30"/><rect x="863" y="204" width="2" height="6" fill="#e06a30"/><rect x="865" y="196" width="2" height="14" fill="#6aa88a"/><rect x="869" y="196" width="2" height="16" fill="#ddd"/><path d="M858 199H862M867 196H871" stroke="#ddd"/><path d="M715.5 219V236.5H733" fill="none" stroke="#8a8a8a" stroke-width="1"/><circle cx="719.5" cy="224.5" r="1.6" fill="#e06a30"/><circle cx="727.5" cy="223.5" r="1.6" fill="#6aa88a"/><circle cx="724.5" cy="228.5" r="1.6" fill="#f5cd7a"/><circle cx="731.5" cy="228.5" r="1.6" fill="#4a7ac0"/><circle cx="718.5" cy="230.5" r="1.6" fill="#4a7ac0"/><circle cx="728.5" cy="232.5" r="1.6" fill="#8a8a8a"/><circle cx="751.5" cy="227.3" r="9" fill="#8fb0dc"/><path d="M751.5 227.3L751.5 218.3A9 9 0 0 0 742.7 225.5Z" fill="#f0ddb8"/><path d="M751.5 227.3L742.7 225.5A9 9 0 0 0 745.5 234Z" fill="#e8b8a0"/><path d="M751.5 218.3V227.3L745.5 234" fill="none" stroke="#333" stroke-width=".8"/><path d="M742.7 225.5L751.5 227.3" stroke="#333" stroke-width=".8"/><rect x="771" y="219" width="18" height="18" fill="#9a9a9a"/><rect x="772" y="220" width="3" height="5" fill="#fff"/><rect x="772" y="226" width="3" height="3" fill="#fff"/><rect x="776" y="220" width="8" height="5" fill="#c9d9ee"/><rect x="776" y="226" width="8" height="3" fill="#c9d9ee"/><rect x="785" y="220" width="3" height="9" fill="#c9d9ee"/><rect x="772" y="230" width="7" height="6" fill="#fff"/><rect x="780" y="230" width="8" height="6" fill="#fff"/><circle cx="807.5" cy="227.3" r="8.3" fill="#fff" stroke="#4a7ac0" stroke-width="1.4"/><ellipse cx="807.5" cy="227.3" rx="4" ry="8" fill="none" stroke="#6aa88a" stroke-width=".9"/><path d="M799.5 224.5H815.5M799.5 230H815.5M807.5 219.3V235.3" stroke="#6aa88a" stroke-width=".9"/><rect x="826" y="218" width="20.5" height="20.5" fill="#222" stroke="#f2c811" stroke-width="2"/><rect x="828" y="220" width="16.5" height="16.5" fill="#4e4e4e"/><rect x="828" y="220" width="16.5" height="2" fill="#333"/><rect x="829.0" y="222.6" width="4.2" height="3.8" fill="#8c8c8c"/><rect x="829.0" y="227.29999999999998" width="4.2" height="3.8" fill="#8c8c8c"/><rect x="829.0" y="232.0" width="4.2" height="3.8" fill="#8c8c8c"/><rect x="834.2" y="222.6" width="4.2" height="3.8" fill="#8c8c8c"/><rect x="834.2" y="227.29999999999998" width="4.2" height="3.8" fill="#8c8c8c"/><rect x="834.2" y="232.0" width="4.2" height="3.8" fill="#8c8c8c"/><rect x="839.4" y="222.6" width="4.2" height="3.8" fill="#8c8c8c"/><rect x="839.4" y="227.29999999999998" width="4.2" height="3.8" fill="#8c8c8c"/><rect x="839.4" y="232.0" width="4.2" height="3.8" fill="#8c8c8c"/><rect x="855.5" y="219.5" width="16.5" height="17" fill="#a8a8a8"/><rect x="855.5" y="219.5" width="16.5" height="3.2" fill="#4a7ac0"/><rect x="856.5" y="223.2" width="4.3" height="3.7" fill="#fff"/><rect x="856.5" y="227.79999999999998" width="4.3" height="3.7" fill="#fff"/><rect x="856.5" y="232.39999999999998" width="4.3" height="3.7" fill="#d6e2f2"/><rect x="861.7" y="223.2" width="4.3" height="3.7" fill="#fff"/><rect x="861.7" y="227.79999999999998" width="4.3" height="3.7" fill="#fff"/><rect x="861.7" y="232.39999999999998" width="4.3" height="3.7" fill="#d6e2f2"/><rect x="866.9" y="223.2" width="4.3" height="3.7" fill="#d6e2f2"/><rect x="866.9" y="227.79999999999998" width="4.3" height="3.7" fill="#d6e2f2"/><rect x="866.9" y="232.39999999999998" width="4.3" height="3.7" fill="#d6e2f2"/><path d="M715 245L729 244.5L728.5 248.5L717 248Z" fill="#c4c4c4"/><path d="M730 244V253L731.5 252.5L732.5 244Z" fill="#f5cd7a"/><path d="M715 250L720.5 249.5L722 253.5L715 253.5Z" fill="#4a7ac0"/><path d="M722.5 249.5L729.5 249.5L729 253L723.5 253Z" fill="#c4c4c4"/><path d="M716 254.5L722 254.5L723 259L720 261Z" fill="#c4c4c4"/><path d="M724 254.5L732 254.5L731 259L725 260Z" fill="#8fb0dc"/><rect x="742" y="244" width="19" height="3" fill="#8fb0dc"/><rect x="745" y="248" width="13" height="3" fill="#f5cd7a"/><rect x="747" y="252" width="9" height="3" fill="#8fb0dc"/><rect x="749" y="256" width="5" height="3" fill="#8fb0dc"/><path d="M772 256A8.5 8.5 0 0 1 782 247.5" fill="none" stroke="#e8c06a" stroke-width="3.2"/><path d="M782 247.5A8.5 8.5 0 0 1 788 256" fill="none" stroke="#6aa88a" stroke-width="3.2"/><path d="M778 257L785 251" stroke="#555" stroke-width="1.2"/><rect x="799.5" y="243.5" width="17" height="17" fill="#fff" stroke="#999"/><rect x="801" y="245" width="2" height="14" fill="#999"/><rect x="806" y="245" width="6" height="2" fill="#8fb0dc"/><rect x="806" y="248" width="3" height="1" fill="#aaa"/><rect x="806" y="251" width="6" height="2" fill="#8fb0dc"/><rect x="806" y="254" width="3" height="1" fill="#aaa"/><rect x="827" y="245" width="18" height="12.5" fill="#fff" stroke="#999"/><text x="836" y="253.5" font-size="9" font-weight="bold" text-anchor="middle" fill="#4a7ac0" font-family="Liberation Sans" letter-spacing="-0.3">123</text><rect x="830" y="255" width="12" height="1" fill="#555"/><rect x="855" y="245" width="18" height="12.5" fill="#fff" stroke="#999"/><path d="M859 252L861.5 248.5L864 252Z" fill="#6aa88a"/><path d="M864.5 248.5H869.5L867 252Z" fill="#e06a30"/><rect x="858" y="254" width="12" height="1" fill="#555"/><rect x="715" y="267" width="17" height="18" fill="#fff" stroke="#999"/><rect x="715" y="267" width="18" height="3" fill="#4a7ac0"/><rect x="717" y="272" width="3" height="2.5" fill="#8fb0dc"/><rect x="717" y="276" width="3" height="2.5" fill="#e8c06a"/><rect x="717" y="280" width="3" height="2.5" fill="#e8a08a"/><path d="M724 276H735L731 281V286H728V281Z" fill="#8a8a8a" stroke="#444" stroke-width=".6"/><circle cx="751.7" cy="275.9" r="7" fill="none" stroke="#4a7ac0" stroke-width="3.6"/><path d="M751.7 268.9A7 7 0 0 1 758.3 273.6" fill="none" stroke="#e8c06a" stroke-width="3.6"/><path d="M751.7 268.9A7 7 0 0 0 745 273.8" fill="none" stroke="#8fb0dc" stroke-width="3.6"/><text x="780.5" y="285" font-size="21" font-weight="bold" text-anchor="middle" fill="#8fb0dc" font-family="Liberation Sans">R</text><circle cx="801.5" cy="275" r="1.3" fill="#fff"/><circle cx="808" cy="275" r="1.3" fill="#fff"/><circle cx="814.5" cy="275" r="1.3" fill="#fff"/></svg>
<svg class="r" style="left:727px;top:298px" width="18" height="20" viewBox="0 0 18 20"><rect x="1.5" y="4" width="4.5" height="14" fill="#fff"/><rect x="6.5" y="11" width="4.5" height="7" fill="#fff"/><rect x="11.5" y="2" width="4.5" height="16" fill="#fff"/></svg>
<div class="r" style="left:718px;top:324px;width:36px;height:2px;background:#f2c811"></div>
<svg class="r" style="left:765px;top:296px" width="24" height="24" viewBox="0 0 24 24"><g transform="translate(2.3 20) rotate(-43)" fill="none" stroke="#fff" stroke-width="1.5"><path d="M0.5 0.8Q1.5 -3.6 6 -3.2L8.2 -2.4V2.4L6 3.2Q2.5 3.6 0.5 0.8Z"/><path d="M8.6 -2V2M11 -2V2" stroke-width="1.4"/><rect x="11.6" y="-2.1" width="12.6" height="4.2" rx="2.1"/></g></svg>
<div class="t" style="left:718.00px;top:335.33px;font-size:12.6px;color:#a8a8a8;letter-spacing:0.000px;transform:scaleX(0.9151);transform-origin:0 0;-webkit-text-stroke:0.25px #a8a8a8;">Values</div>
<div class="r" style="left:710px;top:354px;width:170px;height:62px;border:1px dashed #6e6e6e;border-radius:5px;box-sizing:border-box"></div>
<div class="r" style="left:713px;top:358px;width:164px;height:23px;background:#333;border:1px solid #262626;border-radius:3px;box-sizing:border-box"></div>
<div class="t" style="left:718.00px;top:364.13px;font-size:12.6px;color:#fff;letter-spacing:0.000px;transform:scaleX(0.8531);transform-origin:0 0;-webkit-text-stroke:0.25px #fff;">CUISINE</div>
<svg class="r" style="left:847px;top:367px" width="9" height="5" viewBox="0 0 9 5"><path d="M0.5 0.5H8L4.25 4.5Z" fill="#8a8a8a"/></svg>
<svg class="r" style="left:863px;top:366px" width="10" height="10" viewBox="0 0 10 10"><path d="M1 1L9 9M9 1L1 9" stroke="#8a8a8a" stroke-width="1"/></svg>
<div class="r" style="left:713px;top:383px;width:164px;height:23px;background:#333;border:1px solid #262626;border-radius:3px;box-sizing:border-box"></div>
<div class="t" style="left:718.00px;top:389.13px;font-size:12.6px;color:#fff;letter-spacing:0.000px;transform:scaleX(0.8517);transform-origin:0 0;-webkit-text-stroke:0.25px #fff;">ZIPCODE</div>
<svg class="r" style="left:847px;top:392px" width="9" height="5" viewBox="0 0 9 5"><path d="M0.5 0.5H8L4.25 4.5Z" fill="#8a8a8a"/></svg>
<svg class="r" style="left:863px;top:391px" width="10" height="10" viewBox="0 0 10 10"><path d="M1 1L9 9M9 1L1 9" stroke="#8a8a8a" stroke-width="1"/></svg>
<div class="t" style="left:720.20px;top:434.47px;font-size:14.8px;color:#fff;font-weight:bold;letter-spacing:0.000px;transform:scaleX(0.9411);transform-origin:0 0;">Filters</div>
<div class="t" style="left:718.00px;top:468.63px;font-size:12.6px;color:#a8a8a8;letter-spacing:0.000px;transform:scaleX(0.9412);transform-origin:0 0;-webkit-text-stroke:0.25px #a8a8a8;">Visual level filters</div>
<div class="r" style="left:710px;top:492px;width:170px;height:61px;border:1px dashed #6e6e6e;border-radius:5px;box-sizing:border-box"></div>
<div class="r" style="left:713px;top:495px;width:164px;height:23px;background:#333;border:1px solid #262626;border-radius:3px;box-sizing:border-box"></div>
<div class="t" style="left:721.60px;top:500.63px;font-size:12.6px;color:#fff;letter-spacing:0.000px;transform:scaleX(0.8829);transform-origin:0 0;-webkit-text-stroke:0.25px #fff;">CUISINE(All)</div>
<div class="r" style="left:713px;top:520px;width:164px;height:23px;background:#333;border:1px solid #262626;border-radius:3px;box-sizing:border-box"></div>
<div class="t" style="left:721.60px;top:525.63px;font-size:12.6px;color:#fff;letter-spacing:0.000px;transform:scaleX(0.8788);transform-origin:0 0;-webkit-text-stroke:0.25px #fff;">ZIPCODE(All)</div>
<div class="t" style="left:718.40px;top:566.73px;font-size:12.6px;color:#a8a8a8;letter-spacing:0.000px;transform:scaleX(0.9270);transform-origin:0 0;-webkit-text-stroke:0.25px #a8a8a8;">Page level filters</div>
<div class="r" style="left:710px;top:590px;width:170px;height:40px;border:1px dashed #6e6e6e;border-radius:5px;box-sizing:border-box"></div>
<div class="t" style="left:719.70px;top:596.83px;font-size:12.6px;color:#8a8a8a;letter-spacing:0.000px;transform:scaleX(0.9361);transform-origin:0 0;-webkit-text-stroke:0.25px #8a8a8a;">Drag data fields here</div>
<div class="r" style="left:887px;top:118px;width:180px;height:48px;background:#222"></div>
<div class="t" style="left:899.50px;top:135.07px;font-size:14.8px;color:#fff;font-weight:bold;letter-spacing:0.000px;transform:scaleX(0.9002);transform-origin:0 0;">Fields</div>
<svg class="r" style="left:1046px;top:136px" width="10" height="13" viewBox="0 0 10 13"><path d="M2 1L7.5 6.5L2 12" fill="none" stroke="#c4c4c4" stroke-width="1.1"/></svg>
<div class="r" style="left:887px;top:166px;width:180px;height:47px;background:#474747"></div>
<div class="r" style="left:887px;top:213px;width:180px;height:1px;background:#1e1e1e"></div>
<div class="r" style="left:887px;top:214px;width:180px;height:389px;background:#474747"></div>
<div class="r" style="left:897px;top:173px;width:160px;height:30px;background:#222;border:1px solid #0e0e0e;box-sizing:border-box"></div>
<svg class="r" style="left:907px;top:178px" width="19" height="19" viewBox="0 0 19 19"><circle cx="12" cy="7" r="5" fill="none" stroke="#9a9a9a" stroke-width="1.2"/><path d="M8.5 10.5L2 17" stroke="#9a9a9a" stroke-width="1.3"/></svg>
<div class="t" style="left:933.20px;top:183.33px;font-size:12.6px;color:#b4b4b4;letter-spacing:0.000px;transform:scaleX(0.9468);transform-origin:0 0;-webkit-text-stroke:0.25px #b4b4b4;">Search</div>
<svg class="r" style="left:895px;top:229.5px" width="9" height="8" viewBox="0 0 9 8"><path d="M7 1V7H1Z" fill="#8a98a8"/></svg>
<svg class="r" style="left:911px;top:227px" width="15" height="14" viewBox="0 0 15 14"><rect x="1" y="0.5" width="13" height="12" fill="#a4a4a4"/><rect x="2" y="3.2" width="3" height="2.2" fill="#fff"/><rect x="2" y="6.2" width="3" height="2.2" fill="#fff"/><rect x="2" y="9.2" width="3" height="2.2" fill="#fff"/><rect x="6" y="3.2" width="3" height="2.2" fill="#fff"/><rect x="6" y="6.2" width="3" height="2.2" fill="#fff"/><rect x="6" y="9.2" width="3" height="2.2" fill="#fff"/><rect x="10" y="3.2" width="3" height="2.2" fill="#fff"/><rect x="10" y="6.2" width="3" height="2.2" fill="#fff"/><rect x="10" y="9.2" width="3" height="2.2" fill="#fff"/></svg>
<div class="t" style="left:937.70px;top:228.33px;font-size:12.6px;color:#f2c811;letter-spacing:0.000px;transform:scaleX(0.8355);transform-origin:0 0;-webkit-text-stroke:0.25px #f2c811;">RESTAURANTS</div>
<div class="r" style="left:892px;top:249px;width:168px;height:20px;background:#636363;border-radius:3px;box-shadow:0 1px 0 #383838"></div>
<svg class="r" style="left:918px;top:254px" width="12" height="12" viewBox="0 0 12 12"><rect x="0" y="0" width="12" height="12" fill="#c2c2c2"/><rect x="1.6" y="1.6" width="8.8" height="8.8" fill="#fff"/></svg>
<div class="t" style="left:951.00px;top:253.53px;font-size:12.6px;color:#fff;letter-spacing:0.000px;transform:scaleX(0.8466);transform-origin:0 0;-webkit-text-stroke:0.25px #fff;">_ID</div>
<div class="r" style="left:892px;top:271px;width:168px;height:20px;background:#636363;border-radius:3px;box-shadow:0 1px 0 #383838"></div>
<svg class="r" style="left:918px;top:276px" width="12" height="12" viewBox="0 0 12 12"><rect x="0" y="0" width="12" height="12" fill="#c2c2c2"/><rect x="1.6" y="1.6" width="8.8" height="8.8" fill="#fff"/></svg>
<div class="t" style="left:951.00px;top:275.53px;font-size:12.6px;color:#fff;letter-spacing:0.000px;transform:scaleX(0.8817);transform-origin:0 0;-webkit-text-stroke:0.25px #fff;">BOROUGH</div>
<div class="r" style="left:892px;top:293px;width:168px;height:20px;background:#636363;border-radius:3px;box-shadow:0 1px 0 #383838"></div>
<div class="r" style="left:918px;top:298px;width:12px;height:12px;background:#f2c811"></div>
<svg class="r" style="left:918px;top:298px" width="12" height="12" viewBox="0 0 12 12"><path d="M2.5 6L5 8.5L9.5 3" fill="none" stroke="#222" stroke-width="1.4"/></svg>
<div class="t" style="left:951.00px;top:297.53px;font-size:12.6px;color:#fff;letter-spacing:0.000px;transform:scaleX(0.8511);transform-origin:0 0;-webkit-text-stroke:0.25px #fff;">CUISINE</div>
<div class="r" style="left:892px;top:315px;width:168px;height:20px;background:#636363;border-radius:3px;box-shadow:0 1px 0 #383838"></div>
<svg class="r" style="left:918px;top:320px" width="12" height="12" viewBox="0 0 12 12"><rect x="0" y="0" width="12" height="12" fill="#c2c2c2"/><rect x="1.6" y="1.6" width="8.8" height="8.8" fill="#fff"/></svg>
<div class="t" style="left:951.00px;top:319.53px;font-size:12.6px;color:#fff;letter-spacing:0.000px;transform:scaleX(0.9229);transform-origin:0 0;-webkit-text-stroke:0.25px #fff;">NAME</div>
<div class="r" style="left:892px;top:337px;width:168px;height:20px;background:#636363;border-radius:3px;box-shadow:0 1px 0 #383838"></div>
<svg class="r" style="left:918px;top:342px" width="12" height="12" viewBox="0 0 12 12"><rect x="0" y="0" width="12" height="12" fill="#c2c2c2"/><rect x="1.6" y="1.6" width="8.8" height="8.8" fill="#fff"/></svg>
<div class="t" style="left:951.00px;top:341.53px;font-size:12.6px;color:#fff;letter-spacing:0.000px;transform:scaleX(0.8403);transform-origin:0 0;-webkit-text-stroke:0.25px #fff;">RESTAURANT_...</div>
<svg class="r" style="left:895px;top:370.5px" width="9" height="8" viewBox="0 0 9 8"><path d="M7 1V7H1Z" fill="#8a98a8"/></svg>
<svg class="r" style="left:911px;top:368px" width="15" height="14" viewBox="0 0 15 14"><rect x="1" y="0.5" width="13" height="12" fill="#a4a4a4"/><rect x="2" y="3.2" width="3" height="2.2" fill="#fff"/><rect x="2" y="6.2" width="3" height="2.2" fill="#fff"/><rect x="2" y="9.2" width="3" height="2.2" fill="#fff"/><rect x="6" y="3.2" width="3" height="2.2" fill="#fff"/><rect x="6" y="6.2" width="3" height="2.2" fill="#fff"/><rect x="6" y="9.2" width="3" height="2.2" fill="#fff"/><rect x="10" y="3.2" width="3" height="2.2" fill="#fff"/><rect x="10" y="6.2" width="3" height="2.2" fill="#fff"/><rect x="10" y="9.2" width="3" height="2.2" fill="#fff"/></svg>
<div class="t" style="left:937.70px;top:369.33px;font-size:12.6px;color:#f2c811;letter-spacing:0.000px;transform:scaleX(0.8382);transform-origin:0 0;-webkit-text-stroke:0.25px #f2c811;">RESTAURANTS_AD...</div>
<div class="r" style="left:892px;top:390px;width:168px;height:20px;background:#636363;border-radius:3px;box-shadow:0 1px 0 #383838"></div>
<svg class="r" style="left:918px;top:395px" width="12" height="12" viewBox="0 0 12 12"><rect x="0" y="0" width="12" height="12" fill="#c2c2c2"/><rect x="1.6" y="1.6" width="8.8" height="8.8" fill="#fff"/></svg>
<div class="t" style="left:951.00px;top:394.53px;font-size:12.6px;color:#fff;letter-spacing:0.000px;transform:scaleX(0.8822);transform-origin:0 0;-webkit-text-stroke:0.25px #fff;">BUILDING</div>
<div class="r" style="left:892px;top:412px;width:168px;height:20px;background:#636363;border-radius:3px;box-shadow:0 1px 0 #383838"></div>
<svg class="r" style="left:918px;top:417px" width="12" height="12" viewBox="0 0 12 12"><rect x="0" y="0" width="12" height="12" fill="#c2c2c2"/><rect x="1.6" y="1.6" width="8.8" height="8.8" fill="#fff"/></svg>
<div class="t" style="left:951.00px;top:416.53px;font-size:12.6px;color:#fff;letter-spacing:0.000px;transform:scaleX(0.8348);transform-origin:0 0;-webkit-text-stroke:0.25px #fff;">RESTAURANTS...</div>
<div class="r" style="left:892px;top:434px;width:168px;height:20px;background:#636363;border-radius:3px;box-shadow:0 1px 0 #383838"></div>
<svg class="r" style="left:918px;top:439px" width="12" height="12" viewBox="0 0 12 12"><rect x="0" y="0" width="12" height="12" fill="#c2c2c2"/><rect x="1.6" y="1.6" width="8.8" height="8.8" fill="#fff"/></svg>
<div class="t" style="left:951.00px;top:438.53px;font-size:12.6px;color:#fff;letter-spacing:0.000px;transform:scaleX(0.7645);transform-origin:0 0;-webkit-text-stroke:0.25px #fff;">STREET</div>
<div class="r" style="left:892px;top:456px;width:168px;height:20px;background:#636363;border-radius:3px;box-shadow:0 1px 0 #383838"></div>
<div class="r" style="left:918px;top:461px;width:12px;height:12px;background:#f2c811"></div>
<svg class="r" style="left:918px;top:461px" width="12" height="12" viewBox="0 0 12 12"><path d="M2.5 6L5 8.5L9.5 3" fill="none" stroke="#222" stroke-width="1.4"/></svg>
<div class="t" style="left:951.00px;top:460.53px;font-size:12.6px;color:#fff;letter-spacing:0.000px;transform:scaleX(0.8571);transform-origin:0 0;-webkit-text-stroke:0.25px #fff;">ZIPCODE</div>
</body></html>
